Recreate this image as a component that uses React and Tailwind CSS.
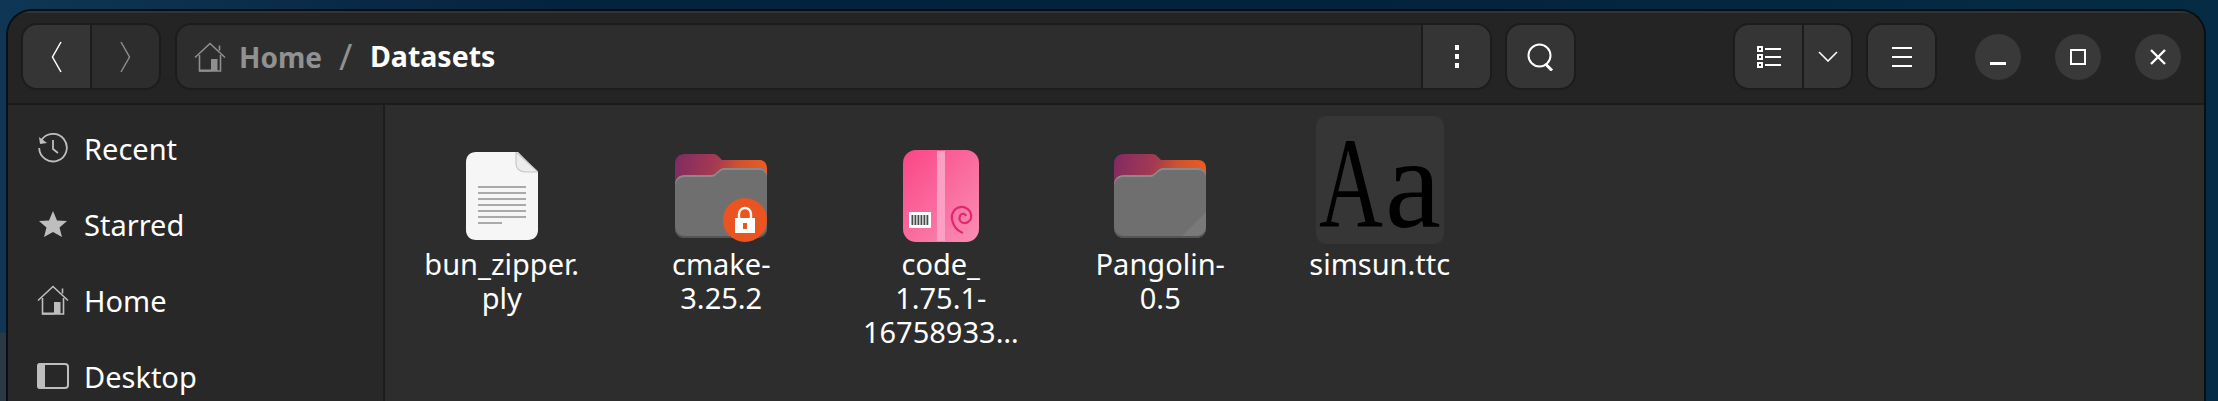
import React from "react";

const Home = ({ className }) => (
  <svg viewBox="0 0 32 30" className={className} fill="none" stroke="currentColor">
    <path d="M1 15.5 L16 1.5 L31 15.5" strokeWidth="1.6" />
    <path d="M25.5 3.5v5" strokeWidth="1.6" />
    <path d="M5.5 13v16h21V13" strokeWidth="1.6" />
    <rect x="17" y="17" width="6.5" height="12" fill="currentColor" stroke="none" />
    <path d="M5.5 28.5h12" strokeWidth="2" />
  </svg>
);

const Folder = ({ corner, id }) => (
  <svg viewBox="0 0 92 84" className="w-[92px] h-[84px] block">
    <defs>
      <linearGradient id={id} x1="0" y1="0.1" x2="1" y2="0.2">
        <stop offset="0" stopColor="#812a63" />
        <stop offset="0.45" stopColor="#a53a52" />
        <stop offset="0.7" stopColor="#cf5230" />
        <stop offset="1" stopColor="#ec5c20" />
      </linearGradient>
    </defs>
    <path d="M10 0H38C41 0 42 1 44 3L47 6H84C89 6 92 9 92 14V40H0V10C0 4 4 0 10 0Z" fill={`url(#${id})`} />
    <path d="M10 21H36C39 21 40 20 42 18L45 15.5C47 14 48 14 50 14H84C89 14 92 17 92 22V74C92 80 88 84 82 84H10C4 84 0 80 0 74V31C0 25 4 21 10 21Z" fill="#6f6f6f" />
    <path d="M0 31C0 25 4 21 10 21H36C39 21 40 20 42 18L45 15.5C47 14 48 14 50 14H84C89 14 92 17 92 22V24C92 19 89 16 84 16H50C48 16 47 16 45 17.5L42 20C40 22 39 23 36 23H10C4 23 0 27 0 33Z" fill="#8a8a8a" />
    <path d="M0 72C0 78 4 82 10 82H82C88 82 92 78 92 72V74C92 80 88 84 82 84H10C4 84 0 80 0 74Z" fill="#555555" />
    {corner && <path d="M68 82L92 58V72C92 78 88 82 82 82Z" fill="#797979" />}
  </svg>
);

const FileIcon = () => (
  <svg viewBox="0 0 72 88" className="w-[72px] h-[88px] block">
    <path d="M10 0H52L72 20V78C72 84 68 88 62 88H10C4 88 0 84 0 78V10C0 4 4 0 10 0Z" fill="#f6f6f6" />
    <path d="M50 0L72 20H60C54 20 50 17 50 11Z" fill="#ececec" stroke="#c8c8c8" strokeWidth="1.2" />
    {[34, 40, 46, 52, 58, 64].map((y) => (
      <rect key={y} x="12" y={y} width="48" height="2" fill="#aaaaaa" />
    ))}
    <rect x="12" y="70" width="24" height="2" fill="#aaaaaa" />
  </svg>
);

const PackageIcon = () => (
  <svg viewBox="0 0 76 92" className="w-[76px] h-[92px] block">
    <defs>
      <linearGradient id="pk" x1="0" y1="0" x2="1" y2="1">
        <stop offset="0" stopColor="#fb4585" />
        <stop offset="1" stopColor="#f98fb5" />
      </linearGradient>
    </defs>
    <rect x="0" y="0" width="76" height="92" rx="13" fill="url(#pk)" />
    <rect x="34" y="1" width="8" height="90" fill="#fba0c2" />
    <rect x="6" y="62" width="22" height="16" fill="#ffffff" />
    {[8.5, 11.5, 14.5, 17.5, 20.5, 23.5].map((x) => (
      <rect key={x} x={x} y="65" width="1.8" height="10" fill="#4a4a4a" />
    ))}
    <path d="M60 83C52 80 48 72 49 65C51 58 58 55 63 58C69 61 70 69 65 72C60 75 55 71 57 66C58 63 62 63 63 66" fill="none" stroke="#e0286a" strokeWidth="2.2" />
  </svg>
);

const Row = ({ icon, label }) => (
  <div className="h-[76px] flex items-center pl-[29px] gap-[15px] text-[#bebebe]">
    <div className="w-[32px] flex justify-center">{icon}</div>
    <span className="text-[29px] text-white leading-none">{label}</span>
  </div>
);

const Item = ({ icon, label }) => (
  <div className="w-[219.5px] flex flex-col items-center">
    <div className="h-[128px] w-[128px] flex items-end justify-center">{icon}</div>
    <div className="mt-[3px] text-[29px] leading-[34px] text-white text-center whitespace-pre-line">{label}</div>
  </div>
);

const Btn = ({ className, children }) => (
  <div className={"flex items-center justify-center " + className}>{children}</div>
);

export default function App() {
  return (
    <div
      className="h-[401px] w-[2218px] overflow-hidden pt-[9px] pl-[6px] pr-[12px] bg-[radial-gradient(circle_at_0_401px,#2a3a42_68px,transparent_69px),linear-gradient(90deg,#0f3654_0%,#05233e_25%,#04223c_60%,#052c44_100%)]"
      style={{ fontFamily: '"Noto Sans", sans-serif' }}
    >
      <div className="h-[420px] rounded-t-[26px] bg-[#242424] border-2 border-[#070e15] border-b-0 flex flex-col overflow-hidden">
        <div className="h-[94px] shrink-0 bg-[#242424] border-t-2 border-[#333333] border-b-2 border-b-[#1b1b1b] flex items-center pl-[13px] pr-[23px] pb-[3px]">
          <div className="flex w-[140px] h-[67px] rounded-[16px] border-2 border-[#1c1c1c] overflow-hidden">
            <Btn className="w-[69px] bg-[#353535] border-r-2 border-[#1c1c1c]">
              <svg viewBox="0 0 11 32" className="w-[11px] h-[32px]" fill="none" stroke="#fff" strokeWidth="1.5">
                <path d="M10 1L1.5 16L10 31" />
              </svg>
            </Btn>
            <Btn className="flex-1 bg-[#2d2d2d]">
              <svg viewBox="0 0 11 32" className="w-[11px] h-[32px]" fill="none" stroke="#8c8c8c" strokeWidth="1.5">
                <path d="M1 1L9.5 16L1 31" />
              </svg>
            </Btn>
          </div>
          <div className="ml-[14px] flex h-[67px] w-[1317px] rounded-[16px] border-2 border-[#1c1c1c] overflow-hidden bg-[#2d2d2d]">
            <div className="flex-1 flex items-center pl-[17px]">
              <Home className="w-[32px] h-[30px] text-[#8f8f8f]" />
              <span className="ml-[13px] w-[81px] text-[28px] font-bold text-[#919191] leading-none">Home</span>
              <span className="ml-[19px] w-[20px] text-[36px] text-[#919191] leading-none">/</span>
              <span className="ml-[11px] text-[28.5px] font-bold text-white leading-none">Datasets</span>
            </div>
            <Btn className="w-[69px] bg-[#353535] border-l-2 border-[#1c1c1c] flex-col gap-[4px]">
              <span className="w-[4px] h-[5px] bg-white" />
              <span className="w-[4px] h-[5px] bg-white" />
              <span className="w-[4px] h-[5px] bg-white" />
            </Btn>
          </div>
          <Btn className="ml-[13px] w-[71px] h-[67px] rounded-[16px] border-2 border-[#1c1c1c] bg-[#353535]">
            <svg viewBox="0 0 30 28" className="w-[30px] h-[28px]" fill="none" stroke="#fff" strokeWidth="2">
              <circle cx="13.5" cy="12.5" r="11" />
              <path d="M20 21.5L26 27.5" strokeWidth="3" />
            </svg>
          </Btn>
          <div className="ml-auto flex w-[120px] h-[67px] rounded-[16px] border-2 border-[#1c1c1c] overflow-hidden bg-[#353535]">
            <Btn className="w-[69px] border-r-2 border-[#1c1c1c]">
              <svg viewBox="0 0 24 22" className="w-[24px] h-[22px]" fill="none" stroke="#fff" strokeWidth="2">
                <rect x="1" y="1" width="4" height="4" />
                <rect x="1" y="9" width="4" height="4" />
                <rect x="1" y="17" width="4" height="4" />
                <path d="M8 3h16M8 11h16M8 19h16" />
              </svg>
            </Btn>
            <Btn className="flex-1">
              <svg viewBox="0 0 20 11" className="w-[20px] h-[11px]" fill="none" stroke="#fff" strokeWidth="1.6">
                <path d="M1 1L10 10L19 1" />
              </svg>
            </Btn>
          </div>
          <Btn className="ml-[13px] w-[71px] h-[67px] rounded-[16px] border-2 border-[#1c1c1c] bg-[#353535]">
            <svg viewBox="0 0 20 20" className="w-[20px] h-[20px]" fill="none" stroke="#fff" strokeWidth="2">
              <path d="M0 1h20M0 10h20M0 19h20" />
            </svg>
          </Btn>
          <Btn className="ml-[38px] w-[46px] h-[46px] rounded-full bg-[#393939]">
            <span className="w-[16px] h-[3px] bg-white mt-[14px]" />
          </Btn>
          <Btn className="ml-[34px] w-[46px] h-[46px] rounded-full bg-[#393939]">
            <span className="w-[16px] h-[16px] border-2 border-white" />
          </Btn>
          <Btn className="ml-[34px] w-[46px] h-[46px] rounded-full bg-[#393939]">
            <svg viewBox="0 0 16 16" className="w-[16px] h-[16px]" fill="none" stroke="#fff" strokeWidth="2.4">
              <path d="M1 1L15 15M15 1L1 15" />
            </svg>
          </Btn>
        </div>
        <div className="flex flex-1">
          <div className="w-[377px] shrink-0 bg-[#282828] border-r-2 border-[#1c1c1c] pt-[5px]">
            <Row
              label="Recent"
              icon={
                <svg viewBox="0 0 30 30" className="w-[30px] h-[30px]" fill="none" stroke="currentColor" strokeWidth="1.8">
                  <path d="M3.5 7A13.8 13.8 0 1 1 1.2 15" />
                  <path d="M1 4L2 11L9 10Z" fill="currentColor" stroke="none" />
                  <path d="M15 7V16L20 20" />
                </svg>
              }
            />
            <Row
              label="Starred"
              icon={
                <svg viewBox="0 0 28 26" className="w-[28px] h-[26px]" fill="currentColor">
                  <path d="M14 0L18 9.5L28 10L20.5 16.5L23 26L14 21L5 26L7.5 16.5L0 10L10 9.5Z" />
                </svg>
              }
            />
            <Row label="Home" icon={<Home className="w-[32px] h-[30px]" />} />
            <Row
              label="Desktop"
              icon={
                <svg viewBox="0 0 32 26" className="w-[32px] h-[26px]">
                  <rect x="1" y="1" width="30" height="24" rx="3" fill="none" stroke="currentColor" strokeWidth="2" />
                  <path d="M3 0H8V26H3C1 26 0 25 0 23V3C0 1 1 0 3 0Z" fill="currentColor" />
                </svg>
              }
            />
          </div>
          <div className="flex-1 bg-[#2d2d2d] flex items-start pl-[7px] pt-[11px]">
            <Item icon={<div className="mb-[4px]"><FileIcon /></div>} label={"bun_zipper.\nply"} />
            <Item
              icon={
                <div className="relative mb-[6px]">
                  <Folder id="fa" />
                  <svg viewBox="0 0 44 44" className="absolute right-0 bottom-[-4px] w-[44px] h-[44px]">
                    <circle cx="22" cy="22" r="22" fill="#e95420" />
                    <path d="M16 20V16A6 6 0 0 1 28 16V20" fill="none" stroke="#fff" strokeWidth="2.4" />
                    <path d="M12 20H32V35H12Z" fill="#fff" />
                    <rect x="20" y="25" width="4" height="6" fill="#e95420" />
                  </svg>
                </div>
              }
              label={"cmake-\n3.25.2"}
            />
            <Item icon={<div className="mb-[2px]"><PackageIcon /></div>} label={"code_\n1.75.1-\n16758933…"} />
            <Item icon={<div className="mb-[6px]"><Folder corner id="fb" /></div>} label={"Pangolin-\n0.5"} />
            <Item
              icon={
                <div
                  className="w-[128px] h-[128px] rounded-[10px] bg-[#363636] flex items-baseline pl-[3px] pt-[2px] text-[#000] text-[130px] leading-none"
                  style={{ fontFamily: '"Liberation Serif", serif' }}
                >
                  <span className="w-[66px] inline-block origin-left scale-x-[0.68]">A</span>
                  <span className="w-[56px] inline-block origin-left scale-x-[0.97]">a</span>
                </div>
              }
              label="simsun.ttc"
            />
          </div>
        </div>
      </div>
    </div>
  );
}
